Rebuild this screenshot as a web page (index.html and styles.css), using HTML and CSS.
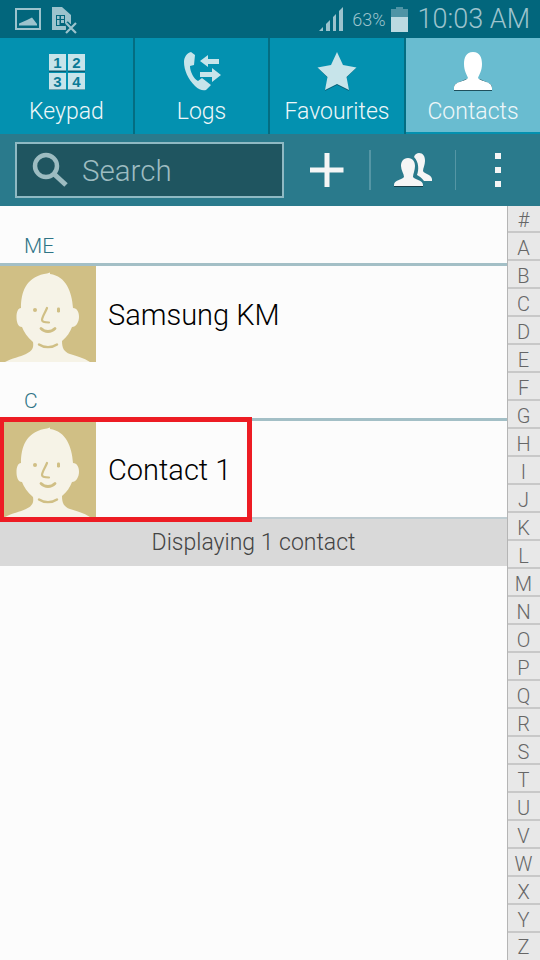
FILE: index.html
```html
<!DOCTYPE html>
<html lang="en">
<head>
    <meta charset="UTF-8">
    <meta name="viewport" content="width=device-width, initial-scale=1.0">
    <title>Contacts</title>
    <link rel="stylesheet" href="styles.css">
</head>
<body>
    <svg class="defs" width="0" height="0">
        <symbol id="face" viewBox="0 0 96 96">
            <rect width="96" height="96" fill="#d0bf85"/>
            <path fill="#f6f3e7" d="M5 96 C12 92 20 91 26 88 C32 85 34 82 33 76 C27 71 24 66 22 61 C18 61 16.500 56 16.500 51 C16.500 46 18 42 21 42 C21 26 26 12 44 8 C46 7.500 48 7.500 50 6.500 L50 8 C66 10 72 26 73 42 C77 42 79 46 79 51 C79 56 76 61 72 61 C70 66 67 71 62 75 C62 82 64 86 70 88 C76 90 84 92 90 96 Z"/>
            <circle cx="35" cy="44" r="2" fill="#d0bf85"/>
            <rect x="57" y="41.500" width="3" height="5" rx="1.200" fill="#d0bf85"/>
            <path fill="none" stroke="#d0bf85" stroke-width="2.200" stroke-linecap="round" d="M47 42 C45 47 42 51 42 54 C42 56 45 56.500 49 56.500"/>
            <path fill="none" stroke="#d0bf85" stroke-width="2.800" stroke-linecap="round" d="M41 62.500 C45 66.500 51 66.500 55 62.500"/>
            <path fill="none" stroke="#d0bf85" stroke-width="2.400" stroke-linecap="round" d="M39 78.500 C44 82 52 82 57 78.500"/>
        </symbol>
    </svg>

    <div class="status-bar">
        <svg class="status-left" width="62" height="30" viewBox="0 0 62 30">
            <rect x="1" y="5" width="24" height="20" fill="none" stroke="#9cc3cd" stroke-width="2"/>
            <path fill="#9cc3cd" d="M4 21.500 V19.500 L12 16 L17 13.500 L22 20 V21.500 Z"/>
            <path fill="#9cc3cd" d="M37 3 H47 L56 11 V20 H51 V26 H37 Z"/>
            <path fill="#02667c" d="M41 11 H50 V22 H41 Z"/>
            <path fill="#9cc3cd" d="M42 12 H44.500 V15 H42 Z M46 12 H49 V15 H46 Z M42 16 H44.500 V21 H42 Z M46 16 H49 V19 H46 Z"/>
            <path stroke="#02667c" stroke-width="5" d="M51 19 L61 29 M61 19 L51 29"/>
            <path stroke="#9cc3cd" stroke-width="2.200" d="M51 19 L61 29 M61 19 L51 29"/>
        </svg>
        <div class="status-right">
            <svg width="24" height="25" viewBox="0 0 24 25"><path fill="#9cc3cd" d="M0 24 L4 20 V24 Z M7 24 V17 L11 13 V24 Z M14 24 V10 L17 7 V24 Z M20 24 V4 L24 0 V24 Z"/></svg>
            <span class="battery-pct">63%</span>
            <svg width="17" height="25" viewBox="0 0 17 25"><path fill="#4f94a5" d="M5 0 H12 V2 H17 V10 H0 V2 H5 Z"/><rect y="10" width="17" height="15" fill="#bcdae1"/></svg>
            <span class="clock">10:03 AM</span>
        </div>
    </div>

    <div class="tabs">
        <div class="tab">
            <svg class="tab-icon icon-keypad" width="36" height="36" viewBox="0 0 36 36">
                <g fill="#075f75"><rect y="1" width="17" height="17"/><rect x="19" y="1" width="17" height="17"/><rect y="19" width="17" height="17"/><rect x="19" y="19" width="17" height="17"/></g>
                <g fill="#c7e4ea"><rect width="17" height="16.500"/><rect x="19" width="17" height="16.500"/><rect y="19" width="17" height="16.500"/><rect x="19" y="19" width="17" height="16.500"/></g>
                <g class="key-num"><text x="8.500" y="14">1</text><text x="27.500" y="14">2</text><text x="8.500" y="33">3</text><text x="27.500" y="33">4</text></g>
            </svg>
            <span class="tab-label">Keypad</span>
        </div>
        <div class="tab">
            <svg class="tab-icon" width="40" height="40" viewBox="0 0 40 40">
                <path fill="#c7e4ea" d="M9 0 L13 3 L12 13 L8 14 C8 20 12 27 16 29 L20 26 L29 33 L24 38 C21 39 17 38 13 34 C6 27 2 18 2 10 C2 5 5 1 9 0 Z"/>
                <path fill="#c7e4ea" d="M18 9 L26 3 V7 H37 V12 H26 V15 Z M39 23 L30 30 V25 H18 V20 H30 V16 Z"/>
            </svg>
            <span class="tab-label">Logs</span>
        </div>
        <div class="tab tab-wide">
            <svg class="tab-icon" width="40" height="40" viewBox="0 0 40 40">
                <path fill="#075f75" d="M20 1 L26 14 L39 16 L29 26 L32 39 L20 33 L8 39 L11 26 L1 16 L14 14 Z"/>
                <path fill="#c7e4ea" d="M20 0 L26 13 L39.500 15.500 L29.500 25 L32 38 L20 32 L8 38 L10.500 25 L0.500 15.500 L14 13 Z"/>
            </svg>
            <span class="tab-label">Favourites</span>
        </div>
        <div class="tab tab-active">
            <svg class="tab-icon" width="40" height="40" viewBox="0 0 40 40">
                <path fill="#1f4f5c" d="M1 39 V35 C1 31 8 30 13 27 H27 C32 30 39 31 39 35 V39 Z"/>
                <path fill="#fff" d="M20 0 C27 0 29 6 29 12 C29 19 26 23 25 26 C28 30 39 29 39 36 V38 H1 V36 C1 29 12 30 15 26 C14 23 11 19 11 12 C11 6 13 0 20 0 Z"/>
            </svg>
            <span class="tab-label">Contacts</span>
        </div>
    </div>

    <div class="toolbar">
        <div class="search-box">
            <svg width="36" height="36" viewBox="0 0 36 36">
                <circle cx="14" cy="14" r="11" fill="none" stroke="#9dbcc1" stroke-width="4.500"/>
                <path stroke="#9dbcc1" stroke-width="5" d="M22 22 L34 33"/>
            </svg>
            <span class="search-text">Search</span>
        </div>
        <div class="tool tool-add">
            <svg width="34" height="34" viewBox="0 0 34 34"><path fill="#f5f5f5" d="M14.500 0 H19.500 V14.500 H33.500 V19.500 H19.500 V34 H14.500 V19.500 H0 V14.500 H14.500 Z"/></svg>
        </div>
        <div class="tool-sep"></div>
        <div class="tool tool-group">
            <svg width="40" height="34" viewBox="0 0 40 34">
                <path fill="#f5f5f5" d="M21 4 C22 1 24 0 26 0 C30 0 32 3 32 8 C32 12 30 15 30 18 C31 21 38 21 39 26 V28 H31 C29 25 26 23 24 22 C26 17 26 9 21 4 Z"/>
                <path fill="#173f4a" d="M1 33 H30 V34 H1 Z"/>
                <path fill="#f5f5f5" d="M15 5 C20 5 22 9 22 13 C22 17 20 21 20 24 C22 27 30 27 30 32 V33 H1 V32 C1 27 9 27 11 24 C11 21 8 17 8 13 C8 9 10 5 15 5 Z"/>
            </svg>
        </div>
        <div class="tool-sep"></div>
        <div class="tool tool-more">
            <span class="dot"></span><span class="dot"></span><span class="dot"></span>
        </div>
    </div>

    <div class="main">
        <div class="list">
            <div class="section-title section-first">ME</div>
            <div class="contact">
                <svg class="avatar" width="96" height="96"><use href="#face"/></svg>
                <span class="contact-name">Samsung KM</span>
            </div>
            <div class="section-title">C</div>
            <div class="contact contact-last">
                <svg class="avatar" width="96" height="96"><use href="#face"/></svg>
                <span class="contact-name">Contact 1</span>
            </div>
            <div class="count">Displaying 1 contact</div>
            <div class="highlight"></div>
        </div>
        <div class="index">
            <span>#</span><span>A</span><span>B</span><span>C</span><span>D</span><span>E</span><span>F</span><span>G</span><span>H</span><span>I</span><span>J</span><span>K</span><span>L</span><span>M</span><span>N</span><span>O</span><span>P</span><span>Q</span><span>R</span><span>S</span><span>T</span><span>U</span><span>V</span><span>W</span><span>X</span><span>Y</span><span>Z</span>
        </div>
    </div>
</body>
</html>
```
FILE: styles.css
```css
* {
    box-sizing: border-box;
}
html, body {
    margin: 0;
    height: 100%;
}
body {
    width: 540px;
    height: 960px;
    overflow: hidden;
    display: flex;
    flex-direction: column;
    font-family: Roboto, "Noto Sans", sans-serif;
    background-color: #fcfcfc;
}
.defs {
    position: absolute;
}

/* status bar */
.status-bar {
    height: 38px;
    flex: none;
    display: flex;
    align-items: center;
    justify-content: space-between;
    padding: 0 10px 0 15px;
    background-color: #02667c;
    color: #9cc3cd;
}
.status-left {
    display: block;
}
.status-right {
    display: flex;
    align-items: center;
    gap: 5px;
}
.status-right svg {
    display: block;
}
.battery-pct {
    font-size: 18px;
    font-weight: 300;
    margin-left: 4px;
}
.clock {
    font-size: 27px;
    font-weight: 300;
    margin-left: 5px;
}

/* tabs */
.tabs {
    height: 96px;
    flex: none;
    display: flex;
    background-color: #0391b0;
}
.tab {
    width: 135px;
    display: flex;
    flex-direction: column;
    align-items: center;
    padding-top: 14px;
    border-right: 2px solid #046d82;
}
.tab-wide {
    width: 136px;
}
.tab:last-child {
    width: 134px;
    border-right: none;
}
.tab-active {
    background-color: #69bcd0;
    border-bottom: 2px solid #0391b0;
}
.tab-icon {
    display: block;
    height: 40px;
}
.icon-keypad {
    height: 36px;
    margin: 2px 0;
}
.tab-label {
    margin-top: 6px;
    font-size: 23px;
    color: #eef7f9;
    font-weight: 300;
}
.key-num text {
    font-family: "Liberation Sans", sans-serif;
    font-size: 15px;
    font-weight: 700;
    fill: #0a7a96;
    text-anchor: middle;
}

/* toolbar */
.toolbar {
    height: 72px;
    flex: none;
    display: flex;
    align-items: center;
    padding-left: 15px;
    background-color: #2a7a8c;
}
.search-box {
    width: 269px;
    height: 56px;
    display: flex;
    align-items: center;
    gap: 14px;
    padding-left: 15px;
    border: 2px solid #8fb9c3;
    background-color: #1f5560;
}
.search-box svg {
    display: block;
}
.search-text {
    padding-top: 2px;
    font-size: 29.500px;
    font-weight: 300;
    color: #9dbcc1;
}
.tool {
    display: flex;
    align-items: center;
    justify-content: center;
}
.tool svg {
    display: block;
}
.tool-add {
    width: 85px;
}
.tool-group {
    width: 84px;
}
.tool-more {
    width: 84px;
    flex-direction: column;
    gap: 8px;
}
.tool-sep {
    width: 1.500px;
    height: 40px;
    background-color: #5596a5;
}
.dot {
    width: 6px;
    height: 6px;
    background-color: #f5f5f5;
}

/* contact list */
.main {
    flex: 1;
    display: flex;
    min-height: 0;
}
.list {
    flex: 1;
    position: relative;
}
.section-title {
    height: 59px;
    padding: 27px 0 0 24px;
    border-bottom: 3px solid #a3bfc6;
    font-size: 21px;
    font-weight: 300;
    line-height: 24px;
    color: #2f7486;
}
.section-first {
    height: 60px;
    padding-top: 28px;
}
.contact {
    height: 96px;
    display: flex;
    align-items: center;
    gap: 12px;
}
.contact-last {
    height: 98px;
    border-bottom: 2px solid #c0cdd2;
}
.avatar {
    display: block;
    flex: none;
}
.contact-name {
    padding-top: 2px;
    font-size: 29px;
    font-weight: 300;
    color: #000;
}
.count {
    height: 47px;
    display: flex;
    align-items: center;
    justify-content: center;
    background-color: #d9d9d9;
    font-size: 23px;
    font-weight: 300;
    color: #444;
}
.highlight {
    position: absolute;
    left: 0;
    top: 211px;
    width: 252px;
    height: 105px;
    border: 5px solid #ed1c24;
    border-left-width: 4px;
}

/* alphabet index */
.index {
    width: 33px;
    flex: none;
    display: grid;
    grid-template-rows: 27px repeat(26, 28px);
    border-left: 1px solid #b5b5b5;
    background-color: #e8e8e8;
}
.index span {
    display: flex;
    align-items: center;
    justify-content: center;
    padding: 3px 1px 0 0;
    font-size: 20px;
    font-weight: 300;
    color: #666;
    border-bottom: 2px solid #c8c8c8;
}
.index span:last-child {
    padding-top: 0;
    border-bottom: none;
}
```
